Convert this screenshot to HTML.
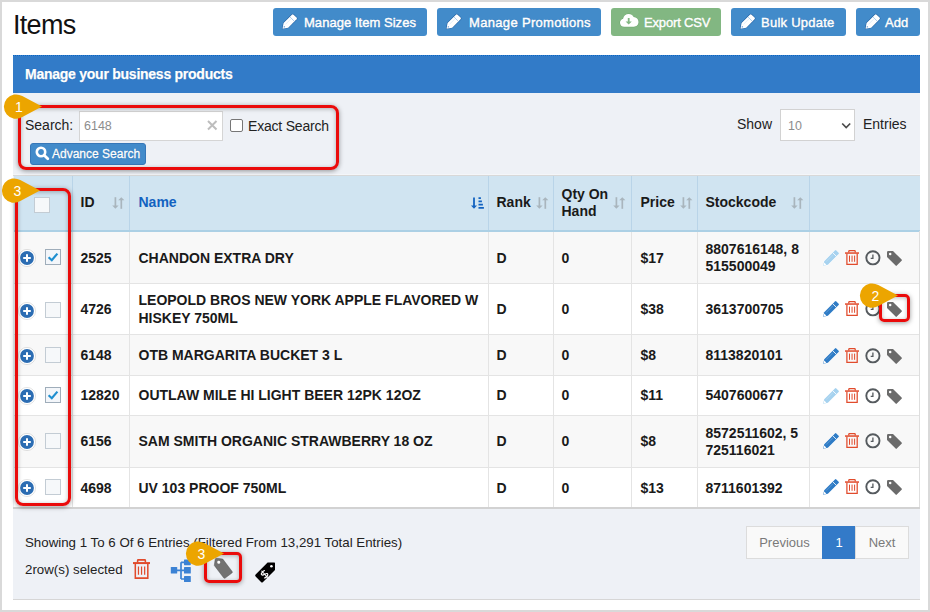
<!DOCTYPE html>
<html><head><meta charset="utf-8">
<style>
*{box-sizing:border-box;margin:0;padding:0}
html,body{width:930px;height:612px;overflow:hidden;background:#fff}
body{font-family:"Liberation Sans",sans-serif;position:relative;color:#222}
.frame{position:absolute;left:0;top:0;width:930px;height:612px;border:2px solid #d9d9d9;z-index:50;pointer-events:none}
.a{position:absolute;white-space:nowrap}
.title{left:13px;top:10px;font-size:27px;line-height:30px;color:#111;letter-spacing:-0.7px}
.btn{position:absolute;top:8px;height:28px;background:#428bca;border-radius:3px;color:#fff;font-size:13px;line-height:28px;text-shadow:0 0 1px #1c5a98}
.btn span{position:absolute;top:1px;-webkit-text-stroke:0.45px #fff}
.btn svg{position:absolute;left:0;top:0}
.green{background:#82b782;text-shadow:0 0 1px #4f8f4f}
.phead{left:13px;top:55px;width:907px;height:38px;background:#327bc8}
.phead span{position:absolute;left:12px;top:10px;font-size:14px;font-weight:bold;color:#fff;letter-spacing:-0.25px;line-height:18px;text-shadow:0 0 1px #1a5aa0;-webkit-text-stroke:0.25px #fff}
.pbody{left:13px;top:93px;width:907px;height:507px;background:#eef1f6;border-bottom:1px solid #d6d6d6}
.redbox{position:absolute;border:3px solid #ea0b0b;border-radius:8px;box-shadow:0 1px 5px rgba(0,0,0,.4),inset 0 1px 4px rgba(0,0,0,.28);z-index:20}
.badge{position:absolute;z-index:30}
.lbl{font-size:14px;line-height:16px;color:#222}
.input{left:79px;top:111px;width:144px;height:30px;background:#fff;border:1px solid #d5d5d5}
.cb{position:absolute;width:13px;height:13px;border:1px solid #767676;border-radius:2px;background:#fff}
.adv{left:30px;top:143px;width:116px;height:22px;background:#428bca;border:1px solid #3677b8;border-radius:3px;color:#fff;font-size:12px;line-height:21px;text-shadow:0 0 1px #1c5a98;-webkit-text-stroke:0.3px #fff}
.sel{left:780px;top:109px;width:75px;height:32px;background:#fff;border:1px solid #d2d2d2}
table{position:absolute;left:14px;top:176px;width:906px;border-collapse:collapse;table-layout:fixed}
.tline{left:13px;top:174px;width:907px;height:2px;border-top:1px solid #f4f6f9;background:#d8d8d8}
.tbot{left:13px;top:507px;width:907px;height:2px;background:#d2d2d2}
.tright{left:919px;top:231px;width:1px;height:276px;background:#dedede}
th,td{font-size:14px;font-weight:bold;text-align:left;vertical-align:middle;padding:0 0 0 8px;line-height:17.5px}
th:nth-child(3),td:nth-child(3),th:nth-child(6),td:nth-child(6){padding-left:9px}
th{background:#d0e4f1;line-height:16.8px;border-left:1px solid #b9d4e8;border-bottom:2px solid #acd0e5;height:55px;color:#1a1a1a;position:relative;padding-top:0;padding-bottom:1px}
th:first-child{border-left:none}
td{border-left:1px solid #e4e4e4;border-top:1px solid #e4e4e4;color:#1a1a1a;position:relative;padding-top:2px}
td:first-child{border-left:none}
tr.odd td{background:#f8f8f8}
tr.even td{background:#fff}
.sort{position:absolute;top:21px}
.chk{position:absolute;width:16px;height:16px;border:1px solid #a9b5c0;background:#f4f7fa}
.plus{position:absolute;left:4px;width:18px;height:18px}
.ic{position:absolute}
.pag{position:absolute;top:526px;height:33px;border:1px solid #dcdcdc;background:#f9f9f9;font-size:13px;line-height:31px;color:#7a7a7a;text-align:center}
</style></head><body>

<div class="frame"></div>
<div class="a title">Items</div>

<!-- header buttons -->
<div class="btn" style="left:273px;width:154px"><svg width="28" height="28" viewBox="0 0 28 28"><g transform="translate(9.5,20.7) rotate(-45)"><path d="M0,0 L4.8,-3.3 L16.6,-3.3 Q17.8,-3.3 17.8,-2.1 L17.8,2.1 Q17.8,3.3 16.6,3.3 L4.8,3.3 Z" fill="#fff" stroke="#1f5d9e" stroke-width="1" paint-order="stroke"/><path d="M13.6,-2.9 V2.9" stroke="#8fbbe6" stroke-width="0.7"/><path d="M5,-1 H13" stroke="#c9def3" stroke-width="0.5"/><path d="M1.8,0 L3.2,0" stroke="#6f9fd3" stroke-width="1.2"/></g></svg><span style="left:31px;letter-spacing:0.04px">Manage Item Sizes</span></div>
<div class="btn" style="left:437px;width:164px"><svg width="28" height="28" viewBox="0 0 28 28"><g transform="translate(9.5,20.7) rotate(-45)"><path d="M0,0 L4.8,-3.3 L16.6,-3.3 Q17.8,-3.3 17.8,-2.1 L17.8,2.1 Q17.8,3.3 16.6,3.3 L4.8,3.3 Z" fill="#fff" stroke="#1f5d9e" stroke-width="1" paint-order="stroke"/><path d="M13.6,-2.9 V2.9" stroke="#8fbbe6" stroke-width="0.7"/><path d="M5,-1 H13" stroke="#c9def3" stroke-width="0.5"/><path d="M1.8,0 L3.2,0" stroke="#6f9fd3" stroke-width="1.2"/></g></svg><span style="left:32px;letter-spacing:0.33px">Manage Promotions</span></div>
<div class="btn green" style="left:611px;width:110px">
 <svg width="28" height="28" viewBox="0 0 28 28"><g transform="translate(9,6)"><path d="M4.2,12.8 C1.8,12.8 0,11 0,8.7 C0,6.8 1.3,5.2 3.1,4.8 C3.5,2 5.9,0 8.7,0 C10.9,0 12.8,1.2 13.7,3.1 C16.4,3.2 18.5,5.4 18.5,8.1 C18.5,10.7 16.5,12.8 13.9,12.8 Z" fill="#fff" stroke="#5f9c5f" stroke-width="0.6" paint-order="stroke"/><path d="M8.7 4V8.6" stroke="#82b782" stroke-width="1.8"/><path d="M5.6 7.4L8.7 10.5L11.8 7.4Z" fill="#82b782"/></g></svg>
 <span style="left:33px;letter-spacing:-0.16px">Export CSV</span></div>
<div class="btn" style="left:731px;width:115px"><svg width="28" height="28" viewBox="0 0 28 28"><g transform="translate(9.5,20.7) rotate(-45)"><path d="M0,0 L4.8,-3.3 L16.6,-3.3 Q17.8,-3.3 17.8,-2.1 L17.8,2.1 Q17.8,3.3 16.6,3.3 L4.8,3.3 Z" fill="#fff" stroke="#1f5d9e" stroke-width="1" paint-order="stroke"/><path d="M13.6,-2.9 V2.9" stroke="#8fbbe6" stroke-width="0.7"/><path d="M5,-1 H13" stroke="#c9def3" stroke-width="0.5"/><path d="M1.8,0 L3.2,0" stroke="#6f9fd3" stroke-width="1.2"/></g></svg><span style="left:30px;letter-spacing:0.25px">Bulk Update</span></div>
<div class="btn" style="left:856px;width:64px"><svg width="28" height="28" viewBox="0 0 28 28"><g transform="translate(9.5,20.7) rotate(-45)"><path d="M0,0 L4.8,-3.3 L16.6,-3.3 Q17.8,-3.3 17.8,-2.1 L17.8,2.1 Q17.8,3.3 16.6,3.3 L4.8,3.3 Z" fill="#fff" stroke="#1f5d9e" stroke-width="1" paint-order="stroke"/><path d="M13.6,-2.9 V2.9" stroke="#8fbbe6" stroke-width="0.7"/><path d="M5,-1 H13" stroke="#c9def3" stroke-width="0.5"/><path d="M1.8,0 L3.2,0" stroke="#6f9fd3" stroke-width="1.2"/></g></svg><span style="left:29px">Add</span></div>

<div class="a phead"><div style="position:absolute;left:0;top:0;width:907px;height:1px;background:repeating-linear-gradient(90deg,#0864c6 0 1px,#3d82c9 1px 2px)"></div><span>Manage your business products</span></div>
<div class="a pbody"></div>

<!-- search area -->
<div class="a lbl" style="left:25px;top:117px">Search:</div>
<div class="a input"><span style="position:absolute;left:4px;top:6px;font-size:12.5px;color:#8d8d8d;line-height:16px">6148</span>
 <svg width="12" height="12" viewBox="0 0 12 12" style="position:absolute;left:126px;top:7px"><path d="M2 2l8.5 8.5M10.5 2l-8.5 8.5" stroke="#bdbdbd" stroke-width="2"/></svg></div>
<div class="cb" style="left:230px;top:119px"></div>
<div class="a lbl" style="left:248px;top:118px;letter-spacing:-0.2px">Exact Search</div>
<div class="a adv"><svg width="16" height="16" viewBox="0 0 16 16" style="position:absolute;left:4px;top:2px"><circle cx="6" cy="6" r="4.2" stroke="#fff" stroke-width="2.6" fill="none"/><path d="M9.2 9.2L12.8 12.8" stroke="#fff" stroke-width="2.8" stroke-linecap="round"/></svg><span style="position:absolute;left:21px;top:0px">Advance Search</span></div>

<div class="a lbl" style="left:737px;top:116px">Show</div>
<div class="a sel"><span style="position:absolute;left:7px;top:8px;font-size:12.5px;color:#8d8d8d;line-height:16px">10</span>
 <svg width="12" height="8" viewBox="0 0 12 8" style="position:absolute;left:60px;top:12px"><path d="M1.2 1.5l4 4 4-4" stroke="#4a4a4a" stroke-width="1.7" fill="none"/></svg></div>
<div class="a lbl" style="left:863px;top:116px">Entries</div>

<!-- table -->
<table>
<colgroup><col style="width:58px"><col style="width:57px"><col style="width:359px"><col style="width:65px"><col style="width:78px"><col style="width:66px"><col style="width:112px"><col style="width:111px"></colgroup>
<tr>
 <th><svg class="ic" style="left:20px;top:21px" width="16" height="16" viewBox="0 0 16 16"><rect x="0.5" y="0.5" width="15" height="15" fill="#f6f8fa" stroke="#c3ccd4"/></svg></th>
 <th>ID<svg class="sort" style="left:39px" width="13" height="12" viewBox="0 0 13 12"><path d="M3.4 0.2V10" stroke="#a9b5bd" stroke-width="1.7"/><path d="M0.2 8.6L3.4 11.8L6.6 8.6Z" fill="#a9b5bd"/><path d="M9.3 11.8V2" stroke="#a9b5bd" stroke-width="1.7"/><path d="M6.2 3.3L9.3 0.2L12.4 3.3Z" fill="#a9b5bd"/></svg></th>
 <th style="color:#1262c0">Name<svg class="sort" style="left:341px" width="13" height="13" viewBox="0 0 13 13"><path d="M3 0.5v9.5" stroke="#1262c0" stroke-width="1.8"/><path d="M0 8.6L3 11.8L6 8.6Z" fill="#1262c0"/><path d="M7.5 1.2h2.4M7.5 4.4h3.4M7.5 7.6h4.4M7.5 10.8h5.4" stroke="#1262c0" stroke-width="1.7"/></svg></th>
 <th>Rank<svg class="sort" style="left:47px" width="13" height="12" viewBox="0 0 13 12"><path d="M3.4 0.2V10" stroke="#a9b5bd" stroke-width="1.7"/><path d="M0.2 8.6L3.4 11.8L6.6 8.6Z" fill="#a9b5bd"/><path d="M9.3 11.8V2" stroke="#a9b5bd" stroke-width="1.7"/><path d="M6.2 3.3L9.3 0.2L12.4 3.3Z" fill="#a9b5bd"/></svg></th>
 <th>Qty On<br>Hand<svg class="sort" style="left:59px" width="13" height="12" viewBox="0 0 13 12"><path d="M3.4 0.2V10" stroke="#a9b5bd" stroke-width="1.7"/><path d="M0.2 8.6L3.4 11.8L6.6 8.6Z" fill="#a9b5bd"/><path d="M9.3 11.8V2" stroke="#a9b5bd" stroke-width="1.7"/><path d="M6.2 3.3L9.3 0.2L12.4 3.3Z" fill="#a9b5bd"/></svg></th>
 <th>Price<svg class="sort" style="left:48px" width="13" height="12" viewBox="0 0 13 12"><path d="M3.4 0.2V10" stroke="#a9b5bd" stroke-width="1.7"/><path d="M0.2 8.6L3.4 11.8L6.6 8.6Z" fill="#a9b5bd"/><path d="M9.3 11.8V2" stroke="#a9b5bd" stroke-width="1.7"/><path d="M6.2 3.3L9.3 0.2L12.4 3.3Z" fill="#a9b5bd"/></svg></th>
 <th>Stockcode<svg class="sort" style="left:93px" width="13" height="12" viewBox="0 0 13 12"><path d="M3.4 0.2V10" stroke="#a9b5bd" stroke-width="1.7"/><path d="M0.2 8.6L3.4 11.8L6.6 8.6Z" fill="#a9b5bd"/><path d="M9.3 11.8V2" stroke="#a9b5bd" stroke-width="1.7"/><path d="M6.2 3.3L9.3 0.2L12.4 3.3Z" fill="#a9b5bd"/></svg></th>
 <th></th>
</tr>
<tr class="odd" style="height:52px"><td><svg class="plus" style="top:17px" viewBox="0 0 18 18"><circle cx="9" cy="9" r="8.3" fill="#fff"/><circle cx="9" cy="9" r="8.6" fill="none" stroke="rgba(0,0,0,.18)" stroke-width="0.6"/><circle cx="9" cy="9" r="6.9" fill="#2c6db3"/><path d="M9 5.2V12.8M5.2 9H12.8" stroke="#fff" stroke-width="2"/></svg><svg class="ic" style="left:31px;top:17px" width="16" height="16" viewBox="0 0 16 16"><rect x="0.5" y="0.5" width="15" height="15" fill="#f3f6fa" stroke="#9fadba"/><path d="M3.6 8.2L6.8 11.2L12.4 4.6" stroke="#1f8fd0" stroke-width="2.2" fill="none"/></svg></td><td>2525</td><td>CHANDON EXTRA DRY</td><td>D</td><td>0</td><td>$17</td><td>8807616148, 8<br>515500049</td><td><svg class="ic" style="left:12px;top:18px;color:#a6d2ef" width="17" height="17" viewBox="0 0 17 17"><g transform="translate(1.2,15.8) rotate(-45)"><path d="M0,0 L4,-2.6 L19.2,-2.6 Q20.2,-2.6 20.2,-1.6 L20.2,1.6 Q20.2,2.6 19.2,2.6 L4,2.6 Z" fill="currentColor" stroke="#fff" stroke-width="0.9" paint-order="stroke"/><path d="M0.6,0 L3,-1.5 L3,1.5 Z" fill="#fff"/><path d="M16,-2.6 V2.6" stroke="#fff" stroke-width="0.8"/><path d="M5,-0.9 H15" stroke="#fff" stroke-width="0.4" opacity="0.5"/></g></svg><svg class="ic" style="left:35px;top:18px" width="14" height="15" viewBox="0 0 14 15"><path d="M3.8 2.6V1.3Q3.8 0.6 4.5 0.6H9.5Q10.2 0.6 10.2 1.3V2.6" stroke="#e14b2c" stroke-width="1.3" fill="none"/><rect x="0" y="2.3" width="14" height="1.5" fill="#e14b2c"/><path d="M1.9 3.6V14.3H12.2V3.6" stroke="#e14b2c" stroke-width="1.25" fill="none"/><path d="M4.5 5.6V11.8M7.05 5.6V11.8M9.6 5.6V11.8" stroke="#e14b2c" stroke-width="1"/></svg><svg class="ic" style="left:55px;top:18px" width="16" height="16" viewBox="0 0 16 16"><circle cx="7.9" cy="7.8" r="6.6" stroke="#555a5e" stroke-width="1.9" fill="none"/><path d="M7.9 4.4V8.4H5.7" stroke="#555a5e" stroke-width="1.3" fill="none"/></svg><svg class="ic" style="left:76px;top:18px" width="16" height="16" viewBox="-0.6 -0.6 16 16"><path d="M0.4,1.6 Q0.4,0.4 1.6,0.4 L6.4,0.4 L15,9 Q15.6,9.6 15,10.2 L10.2,15 Q9.6,15.6 9,15 L0.4,6.4 Z" fill="#6b6b6b"/><circle cx="3.6" cy="3.4" r="1.25" fill="#fff"/></svg></td></tr>
<tr class="even" style="height:51px"><td><svg class="plus" style="top:18px" viewBox="0 0 18 18"><circle cx="9" cy="9" r="8.3" fill="#fff"/><circle cx="9" cy="9" r="8.6" fill="none" stroke="rgba(0,0,0,.18)" stroke-width="0.6"/><circle cx="9" cy="9" r="6.9" fill="#2c6db3"/><path d="M9 5.2V12.8M5.2 9H12.8" stroke="#fff" stroke-width="2"/></svg><svg class="ic" style="left:31px;top:18px" width="16" height="16" viewBox="0 0 16 16"><rect x="0.5" y="0.5" width="15" height="15" fill="#f6f8fa" stroke="#c3ccd4"/></svg></td><td>4726</td><td>LEOPOLD BROS NEW YORK APPLE FLAVORED W<br>HISKEY 750ML</td><td>D</td><td>0</td><td>$38</td><td>3613700705</td><td><svg class="ic" style="left:12px;top:17px;color:#2f7cc6" width="17" height="17" viewBox="0 0 17 17"><g transform="translate(1.2,15.8) rotate(-45)"><path d="M0,0 L4,-2.6 L19.2,-2.6 Q20.2,-2.6 20.2,-1.6 L20.2,1.6 Q20.2,2.6 19.2,2.6 L4,2.6 Z" fill="currentColor" stroke="#fff" stroke-width="0.9" paint-order="stroke"/><path d="M0.6,0 L3,-1.5 L3,1.5 Z" fill="#fff"/><path d="M16,-2.6 V2.6" stroke="#fff" stroke-width="0.8"/><path d="M5,-0.9 H15" stroke="#fff" stroke-width="0.4" opacity="0.5"/></g></svg><svg class="ic" style="left:35px;top:17px" width="14" height="15" viewBox="0 0 14 15"><path d="M3.8 2.6V1.3Q3.8 0.6 4.5 0.6H9.5Q10.2 0.6 10.2 1.3V2.6" stroke="#e14b2c" stroke-width="1.3" fill="none"/><rect x="0" y="2.3" width="14" height="1.5" fill="#e14b2c"/><path d="M1.9 3.6V14.3H12.2V3.6" stroke="#e14b2c" stroke-width="1.25" fill="none"/><path d="M4.5 5.6V11.8M7.05 5.6V11.8M9.6 5.6V11.8" stroke="#e14b2c" stroke-width="1"/></svg><svg class="ic" style="left:55px;top:17px" width="16" height="16" viewBox="0 0 16 16"><circle cx="7.9" cy="7.8" r="6.6" stroke="#555a5e" stroke-width="1.9" fill="none"/><path d="M7.9 4.4V8.4H5.7" stroke="#555a5e" stroke-width="1.3" fill="none"/></svg><svg class="ic" style="left:76px;top:17px" width="16" height="16" viewBox="-0.6 -0.6 16 16"><path d="M0.4,1.6 Q0.4,0.4 1.6,0.4 L6.4,0.4 L15,9 Q15.6,9.6 15,10.2 L10.2,15 Q9.6,15.6 9,15 L0.4,6.4 Z" fill="#6b6b6b"/><circle cx="3.6" cy="3.4" r="1.25" fill="#fff"/></svg></td></tr>
<tr class="odd" style="height:41px"><td><svg class="plus" style="top:12px" viewBox="0 0 18 18"><circle cx="9" cy="9" r="8.3" fill="#fff"/><circle cx="9" cy="9" r="8.6" fill="none" stroke="rgba(0,0,0,.18)" stroke-width="0.6"/><circle cx="9" cy="9" r="6.9" fill="#2c6db3"/><path d="M9 5.2V12.8M5.2 9H12.8" stroke="#fff" stroke-width="2"/></svg><svg class="ic" style="left:31px;top:12px" width="16" height="16" viewBox="0 0 16 16"><rect x="0.5" y="0.5" width="15" height="15" fill="#f6f8fa" stroke="#c3ccd4"/></svg></td><td>6148</td><td>OTB MARGARITA BUCKET 3 L</td><td>D</td><td>0</td><td>$8</td><td>8113820101</td><td><svg class="ic" style="left:12px;top:13px;color:#2f7cc6" width="17" height="17" viewBox="0 0 17 17"><g transform="translate(1.2,15.8) rotate(-45)"><path d="M0,0 L4,-2.6 L19.2,-2.6 Q20.2,-2.6 20.2,-1.6 L20.2,1.6 Q20.2,2.6 19.2,2.6 L4,2.6 Z" fill="currentColor" stroke="#fff" stroke-width="0.9" paint-order="stroke"/><path d="M0.6,0 L3,-1.5 L3,1.5 Z" fill="#fff"/><path d="M16,-2.6 V2.6" stroke="#fff" stroke-width="0.8"/><path d="M5,-0.9 H15" stroke="#fff" stroke-width="0.4" opacity="0.5"/></g></svg><svg class="ic" style="left:35px;top:13px" width="14" height="15" viewBox="0 0 14 15"><path d="M3.8 2.6V1.3Q3.8 0.6 4.5 0.6H9.5Q10.2 0.6 10.2 1.3V2.6" stroke="#e14b2c" stroke-width="1.3" fill="none"/><rect x="0" y="2.3" width="14" height="1.5" fill="#e14b2c"/><path d="M1.9 3.6V14.3H12.2V3.6" stroke="#e14b2c" stroke-width="1.25" fill="none"/><path d="M4.5 5.6V11.8M7.05 5.6V11.8M9.6 5.6V11.8" stroke="#e14b2c" stroke-width="1"/></svg><svg class="ic" style="left:55px;top:13px" width="16" height="16" viewBox="0 0 16 16"><circle cx="7.9" cy="7.8" r="6.6" stroke="#555a5e" stroke-width="1.9" fill="none"/><path d="M7.9 4.4V8.4H5.7" stroke="#555a5e" stroke-width="1.3" fill="none"/></svg><svg class="ic" style="left:76px;top:13px" width="16" height="16" viewBox="-0.6 -0.6 16 16"><path d="M0.4,1.6 Q0.4,0.4 1.6,0.4 L6.4,0.4 L15,9 Q15.6,9.6 15,10.2 L10.2,15 Q9.6,15.6 9,15 L0.4,6.4 Z" fill="#6b6b6b"/><circle cx="3.6" cy="3.4" r="1.25" fill="#fff"/></svg></td></tr>
<tr class="even" style="height:40px"><td><svg class="plus" style="top:11px" viewBox="0 0 18 18"><circle cx="9" cy="9" r="8.3" fill="#fff"/><circle cx="9" cy="9" r="8.6" fill="none" stroke="rgba(0,0,0,.18)" stroke-width="0.6"/><circle cx="9" cy="9" r="6.9" fill="#2c6db3"/><path d="M9 5.2V12.8M5.2 9H12.8" stroke="#fff" stroke-width="2"/></svg><svg class="ic" style="left:31px;top:11px" width="16" height="16" viewBox="0 0 16 16"><rect x="0.5" y="0.5" width="15" height="15" fill="#f3f6fa" stroke="#9fadba"/><path d="M3.6 8.2L6.8 11.2L12.4 4.6" stroke="#1f8fd0" stroke-width="2.2" fill="none"/></svg></td><td>12820</td><td>OUTLAW MILE HI LIGHT BEER 12PK 12OZ</td><td>D</td><td>0</td><td>$11</td><td>5407600677</td><td><svg class="ic" style="left:12px;top:12px;color:#a6d2ef" width="17" height="17" viewBox="0 0 17 17"><g transform="translate(1.2,15.8) rotate(-45)"><path d="M0,0 L4,-2.6 L19.2,-2.6 Q20.2,-2.6 20.2,-1.6 L20.2,1.6 Q20.2,2.6 19.2,2.6 L4,2.6 Z" fill="currentColor" stroke="#fff" stroke-width="0.9" paint-order="stroke"/><path d="M0.6,0 L3,-1.5 L3,1.5 Z" fill="#fff"/><path d="M16,-2.6 V2.6" stroke="#fff" stroke-width="0.8"/><path d="M5,-0.9 H15" stroke="#fff" stroke-width="0.4" opacity="0.5"/></g></svg><svg class="ic" style="left:35px;top:12px" width="14" height="15" viewBox="0 0 14 15"><path d="M3.8 2.6V1.3Q3.8 0.6 4.5 0.6H9.5Q10.2 0.6 10.2 1.3V2.6" stroke="#e14b2c" stroke-width="1.3" fill="none"/><rect x="0" y="2.3" width="14" height="1.5" fill="#e14b2c"/><path d="M1.9 3.6V14.3H12.2V3.6" stroke="#e14b2c" stroke-width="1.25" fill="none"/><path d="M4.5 5.6V11.8M7.05 5.6V11.8M9.6 5.6V11.8" stroke="#e14b2c" stroke-width="1"/></svg><svg class="ic" style="left:55px;top:12px" width="16" height="16" viewBox="0 0 16 16"><circle cx="7.9" cy="7.8" r="6.6" stroke="#555a5e" stroke-width="1.9" fill="none"/><path d="M7.9 4.4V8.4H5.7" stroke="#555a5e" stroke-width="1.3" fill="none"/></svg><svg class="ic" style="left:76px;top:12px" width="16" height="16" viewBox="-0.6 -0.6 16 16"><path d="M0.4,1.6 Q0.4,0.4 1.6,0.4 L6.4,0.4 L15,9 Q15.6,9.6 15,10.2 L10.2,15 Q9.6,15.6 9,15 L0.4,6.4 Z" fill="#6b6b6b"/><circle cx="3.6" cy="3.4" r="1.25" fill="#fff"/></svg></td></tr>
<tr class="odd" style="height:52px"><td><svg class="plus" style="top:17px" viewBox="0 0 18 18"><circle cx="9" cy="9" r="8.3" fill="#fff"/><circle cx="9" cy="9" r="8.6" fill="none" stroke="rgba(0,0,0,.18)" stroke-width="0.6"/><circle cx="9" cy="9" r="6.9" fill="#2c6db3"/><path d="M9 5.2V12.8M5.2 9H12.8" stroke="#fff" stroke-width="2"/></svg><svg class="ic" style="left:31px;top:17px" width="16" height="16" viewBox="0 0 16 16"><rect x="0.5" y="0.5" width="15" height="15" fill="#f6f8fa" stroke="#c3ccd4"/></svg></td><td>6156</td><td>SAM SMITH ORGANIC STRAWBERRY 18 OZ</td><td>D</td><td>0</td><td>$8</td><td>8572511602, 5<br>725116021</td><td><svg class="ic" style="left:12px;top:17px;color:#2f7cc6" width="17" height="17" viewBox="0 0 17 17"><g transform="translate(1.2,15.8) rotate(-45)"><path d="M0,0 L4,-2.6 L19.2,-2.6 Q20.2,-2.6 20.2,-1.6 L20.2,1.6 Q20.2,2.6 19.2,2.6 L4,2.6 Z" fill="currentColor" stroke="#fff" stroke-width="0.9" paint-order="stroke"/><path d="M0.6,0 L3,-1.5 L3,1.5 Z" fill="#fff"/><path d="M16,-2.6 V2.6" stroke="#fff" stroke-width="0.8"/><path d="M5,-0.9 H15" stroke="#fff" stroke-width="0.4" opacity="0.5"/></g></svg><svg class="ic" style="left:35px;top:17px" width="14" height="15" viewBox="0 0 14 15"><path d="M3.8 2.6V1.3Q3.8 0.6 4.5 0.6H9.5Q10.2 0.6 10.2 1.3V2.6" stroke="#e14b2c" stroke-width="1.3" fill="none"/><rect x="0" y="2.3" width="14" height="1.5" fill="#e14b2c"/><path d="M1.9 3.6V14.3H12.2V3.6" stroke="#e14b2c" stroke-width="1.25" fill="none"/><path d="M4.5 5.6V11.8M7.05 5.6V11.8M9.6 5.6V11.8" stroke="#e14b2c" stroke-width="1"/></svg><svg class="ic" style="left:55px;top:17px" width="16" height="16" viewBox="0 0 16 16"><circle cx="7.9" cy="7.8" r="6.6" stroke="#555a5e" stroke-width="1.9" fill="none"/><path d="M7.9 4.4V8.4H5.7" stroke="#555a5e" stroke-width="1.3" fill="none"/></svg><svg class="ic" style="left:76px;top:17px" width="16" height="16" viewBox="-0.6 -0.6 16 16"><path d="M0.4,1.6 Q0.4,0.4 1.6,0.4 L6.4,0.4 L15,9 Q15.6,9.6 15,10.2 L10.2,15 Q9.6,15.6 9,15 L0.4,6.4 Z" fill="#6b6b6b"/><circle cx="3.6" cy="3.4" r="1.25" fill="#fff"/></svg></td></tr>
<tr class="even" style="height:40px"><td><svg class="plus" style="top:11px" viewBox="0 0 18 18"><circle cx="9" cy="9" r="8.3" fill="#fff"/><circle cx="9" cy="9" r="8.6" fill="none" stroke="rgba(0,0,0,.18)" stroke-width="0.6"/><circle cx="9" cy="9" r="6.9" fill="#2c6db3"/><path d="M9 5.2V12.8M5.2 9H12.8" stroke="#fff" stroke-width="2"/></svg><svg class="ic" style="left:31px;top:11px" width="16" height="16" viewBox="0 0 16 16"><rect x="0.5" y="0.5" width="15" height="15" fill="#f6f8fa" stroke="#c3ccd4"/></svg></td><td>4698</td><td>UV 103 PROOF 750ML</td><td>D</td><td>0</td><td>$13</td><td>8711601392</td><td><svg class="ic" style="left:12px;top:11px;color:#2f7cc6" width="17" height="17" viewBox="0 0 17 17"><g transform="translate(1.2,15.8) rotate(-45)"><path d="M0,0 L4,-2.6 L19.2,-2.6 Q20.2,-2.6 20.2,-1.6 L20.2,1.6 Q20.2,2.6 19.2,2.6 L4,2.6 Z" fill="currentColor" stroke="#fff" stroke-width="0.9" paint-order="stroke"/><path d="M0.6,0 L3,-1.5 L3,1.5 Z" fill="#fff"/><path d="M16,-2.6 V2.6" stroke="#fff" stroke-width="0.8"/><path d="M5,-0.9 H15" stroke="#fff" stroke-width="0.4" opacity="0.5"/></g></svg><svg class="ic" style="left:35px;top:11px" width="14" height="15" viewBox="0 0 14 15"><path d="M3.8 2.6V1.3Q3.8 0.6 4.5 0.6H9.5Q10.2 0.6 10.2 1.3V2.6" stroke="#e14b2c" stroke-width="1.3" fill="none"/><rect x="0" y="2.3" width="14" height="1.5" fill="#e14b2c"/><path d="M1.9 3.6V14.3H12.2V3.6" stroke="#e14b2c" stroke-width="1.25" fill="none"/><path d="M4.5 5.6V11.8M7.05 5.6V11.8M9.6 5.6V11.8" stroke="#e14b2c" stroke-width="1"/></svg><svg class="ic" style="left:55px;top:11px" width="16" height="16" viewBox="0 0 16 16"><circle cx="7.9" cy="7.8" r="6.6" stroke="#555a5e" stroke-width="1.9" fill="none"/><path d="M7.9 4.4V8.4H5.7" stroke="#555a5e" stroke-width="1.3" fill="none"/></svg><svg class="ic" style="left:76px;top:11px" width="16" height="16" viewBox="-0.6 -0.6 16 16"><path d="M0.4,1.6 Q0.4,0.4 1.6,0.4 L6.4,0.4 L15,9 Q15.6,9.6 15,10.2 L10.2,15 Q9.6,15.6 9,15 L0.4,6.4 Z" fill="#6b6b6b"/><circle cx="3.6" cy="3.4" r="1.25" fill="#fff"/></svg></td></tr>
</table>
<div class="a tline"></div><div class="a tbot"></div><div class="a tright"></div>

<!-- footer -->
<div class="a" style="left:25px;top:535px;font-size:13.3px;line-height:16px;color:#222">Showing 1 To 6 Of 6 Entries (Filtered From 13,291 Total Entries)</div>
<div class="a" style="left:25px;top:562px;font-size:13.3px;line-height:16px;color:#222">2row(s) selected</div>
<svg class="ic" style="left:133px;top:559px" width="17" height="20" viewBox="0 0 14 15" preserveAspectRatio="none"><path d="M3.8 2.6V1.3Q3.8 0.6 4.5 0.6H9.5Q10.2 0.6 10.2 1.3V2.6" stroke="#e14b2c" stroke-width="1.3" fill="none"/><rect x="0" y="2.3" width="14" height="1.5" fill="#e14b2c"/><path d="M1.9 3.6V14.3H12.2V3.6" stroke="#e14b2c" stroke-width="1.25" fill="none"/><path d="M4.5 5.6V11.8M7.05 5.6V11.8M9.6 5.6V11.8" stroke="#e14b2c" stroke-width="1"/></svg>
<svg class="ic" style="left:170px;top:559px" width="22" height="24" viewBox="0 0 22 24"><g fill="#3b82d4"><rect x="0.8" y="8" width="6.4" height="6.6" rx="0.6"/><rect x="14" y="0.4" width="6.8" height="5.8" rx="0.6"/><rect x="14" y="8" width="6.8" height="6.6" rx="0.6"/><rect x="14" y="17" width="6.8" height="6" rx="0.6"/></g><path d="M7 11.3H11M11 3.3V20M11 3.3H14M11 11.3H14M11 20H14" stroke="#3b82d4" stroke-width="1.7" fill="none"/></svg>
<svg class="ic" style="left:254px;top:562px" width="22" height="22" viewBox="0 0 22 22"><path d="M21,1.2 V8 L9,20 Q8,21 7,20 L1.6,14.6 Q0.6,13.6 1.6,12.6 L13.6,0.6 H20.4 Q21,0.6 21,1.2 Z" fill="#000"/><circle cx="17.4" cy="4.2" r="1.3" fill="#fff"/><g transform="translate(10.6,12.2) rotate(-42)"><path d="M2.5,-2.4 C2.1,-3.5 -2.5,-3.5 -2.5,-1.3 C-2.5,0.6 2.5,-0.3 2.5,1.6 C2.5,3.6 -2.1,3.7 -2.7,2.3" stroke="#fff" stroke-width="1.2" fill="none"/><path d="M0,-4.6V4.6" stroke="#fff" stroke-width="1"/></g></svg>

<div class="pag" style="left:746px;width:77px">Previous</div>
<div class="pag" style="left:822px;width:34px;background:#337ac8;border-color:#337ac8;color:#fff">1</div>
<div class="pag" style="left:855px;width:54px">Next</div>

<!-- annotations -->
<div class="redbox" style="left:18px;top:105px;width:321px;height:65px"></div>
<div class="redbox" style="left:15px;top:188px;width:56px;height:318px"></div>
<div class="redbox" style="left:879px;top:294px;width:31px;height:28px;border-radius:5px"></div>
<div class="redbox" style="left:204px;top:552px;width:38px;height:31px;border-radius:5px"></div>
<svg class="ic" style="left:206px;top:552px;z-index:21" width="34" height="31" viewBox="0 0 34 31"><g transform="translate(7.5,6.8) scale(1.1)"><path d="M0.4,1.8 Q0.4,0.4 1.8,0.4 L7.2,0.4 L17.2,10.4 Q17.9,11.1 17.2,11.8 L11.8,17.2 Q11.1,17.9 10.4,17.2 L0.4,7.2 Z" transform="rotate(8 9 9)" fill="#727272" stroke="#4a4a4a" stroke-width="0.4"/><circle cx="4" cy="3.8" r="1.4" fill="#fff" transform="rotate(8 9 9)"/></g></svg>

<svg class="badge" style="left:3px;top:94px" width="40" height="26" viewBox="0 0 40 26"><path d="M39,12.6 L19.3,2.1 A12.2,12.2 0 1 0 19.3,23.1 Z" fill="#eca500"/><text x="12" y="17.8" style="font-family:'Liberation Sans',sans-serif;font-size:14px" fill="#fff">1</text></svg>
<svg class="badge" style="left:1px;top:178px" width="40" height="26" viewBox="0 0 40 26"><path d="M39,12.6 L19.3,2.1 A12.2,12.2 0 1 0 19.3,23.1 Z" fill="#eca500"/><text x="12.5" y="17.8" style="font-family:'Liberation Sans',sans-serif;font-size:14px" fill="#fff">3</text></svg>
<svg class="badge" style="left:859px;top:283px" width="40" height="26" viewBox="0 0 40 26"><path d="M39,12.6 L19.3,2.1 A12.2,12.2 0 1 0 19.3,23.1 Z" fill="#eca500"/><text x="12.5" y="17.8" style="font-family:'Liberation Sans',sans-serif;font-size:14px" fill="#fff">2</text></svg>
<svg class="badge" style="left:185px;top:541px" width="40" height="26" viewBox="0 0 40 26"><path d="M39,12.6 L19.3,2.1 A12.2,12.2 0 1 0 19.3,23.1 Z" fill="#eca500"/><text x="12.5" y="17.8" style="font-family:'Liberation Sans',sans-serif;font-size:14px" fill="#fff">3</text></svg>

</body></html>
